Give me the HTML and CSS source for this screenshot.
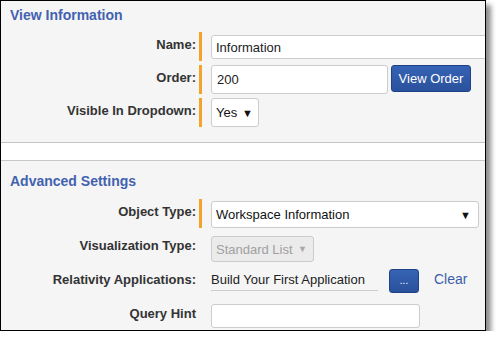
FILE: index.html
```html
<!DOCTYPE html>
<html lang="en">
<head>
	<meta charset="UTF-8">
	<title>View Information</title>
	<link rel="stylesheet" href="styles.css">
</head>
<body>
	<div class="frame">
		<div class="section first">
			<h2 class="heading">View Information</h2>
			<div class="row">
				<label class="label">Name:</label>
				<span class="req"></span>
				<div class="field">
					<input class="text name" type="text" value="Information">
				</div>
			</div>
			<div class="row">
				<label class="label">Order:</label>
				<span class="req"></span>
				<div class="field">
					<input class="text order" type="text" value="200">
					<button class="btn view-order">View Order</button>
				</div>
			</div>
			<div class="row">
				<label class="label">Visible In Dropdown:</label>
				<span class="req"></span>
				<div class="field">
					<div class="select yes">Yes <span class="arrow">&#9660;</span></div>
				</div>
			</div>
		</div>
		<div class="gap"></div>
		<div class="section second">
			<h2 class="heading">Advanced Settings</h2>
			<div class="row">
				<label class="label">Object Type:</label>
				<span class="req"></span>
				<div class="field">
					<div class="select objtype">Workspace Information <span class="arrow">&#9660;</span></div>
				</div>
			</div>
			<div class="row">
				<label class="label">Visualization Type:</label>
				<span class="req none"></span>
				<div class="field">
					<div class="select disabled">Standard List <span class="arrow">&#9660;</span></div>
				</div>
			</div>
			<div class="row">
				<label class="label">Relativity Applications:</label>
				<span class="req none"></span>
				<div class="field">
					<span class="apps">Build Your First Application</span>
					<button class="btn dots">...</button>
					<a class="clear" href="#">Clear</a>
				</div>
			</div>
			<div class="row">
				<label class="label">Query Hint</label>
				<span class="req none"></span>
				<div class="field">
					<input class="text hint" type="text">
				</div>
			</div>
		</div>
	</div>
</body>
</html>
```

FILE: styles.css
```css
body{
	margin: 0;
	background-color: white;
	font-family: "Liberation Sans", Arial, sans-serif;
	font-size: 13px;
	color: #333;
}

.frame{
	width: 484px;
	height: 329px;
	border: 1px solid black;
	background-color: #f5f5f5;
	box-shadow: 5px 5px 5px rgba(0, 0, 0, 0.45);
	overflow: hidden;
}

.section{
	display: flex;
	flex-direction: column;
	gap: 4px;
}

.first{
	padding: 6px 0 15px 0;
	border-bottom: 1px solid #c4c4c4;
	box-shadow: 0 1px 2px rgba(0, 0, 0, 0.15);
}

.second{
	padding-top: 12px;
	gap: 5px;
	border-top: 1px solid #c8c8c8;
}

.gap{
	height: 17px;
	background-color: white;
}

.heading{
	margin: 0 0 4px 0;
	padding-left: 9px;
	font-size: 14px;
	line-height: 17px;
	color: #4262b0;
}

.second .heading{
	margin-bottom: 4px;
}

.row{
	display: flex;
	height: 29px;
}

.label{
	flex-shrink: 0;
	width: 195px;
	padding-top: 5px;
	text-align: right;
	font-weight: bold;
	line-height: 15px;
	color: #333;
}

.req{
	flex-shrink: 0;
	width: 3px;
	margin-left: 3px;
	background-color: #f3a22a;
}

.req.none{
	background-color: transparent;
}

.field{
	display: flex;
	flex-shrink: 0;
	align-items: flex-start;
	margin-left: 9px;
}

.text{
	box-sizing: border-box;
	border: 1px solid #ccc;
	border-radius: 3px;
	background-color: white;
	font-family: inherit;
	font-size: 13px;
	color: #222;
	padding: 0 4px;
	margin: 0;
}

.name{
	width: 300px;
	height: 24px;
	margin-top: 3px;
}

.order{
	width: 177px;
	height: 29px;
	padding-left: 5px;
}

.hint{
	width: 209px;
	height: 24px;
	margin-top: 3px;
}

.btn{
	box-sizing: border-box;
	border: 1px solid #1f4286;
	border-radius: 3px;
	background: linear-gradient(#3663b4, #2a519c);
	color: white;
	font-family: inherit;
	font-size: 13px;
	padding: 0;
	margin: 0;
}

.view-order{
	width: 80px;
	height: 27px;
	margin-left: 3px;
}

.dots{
	width: 30px;
	height: 24px;
	margin: 2px 0 0 11px;
	font-size: 10px;
	line-height: 20px;
}

.select{
	box-sizing: border-box;
	display: flex;
	align-items: center;
	justify-content: space-between;
	border: 1px solid #ccc;
	border-radius: 3px;
	background-color: white;
	padding: 0 5px 0 4px;
	color: #111;
}

.arrow{
	font-size: 11px;
	color: #111;
}

.yes{
	width: 48px;
	height: 29px;
}

.objtype{
	width: 268px;
	height: 27px;
	margin-top: 2px;
	padding-right: 7px;
}

.disabled{
	width: 103px;
	height: 26px;
	margin-top: 3px;
	background-color: #ebebeb;
	color: #a0a0a0;
	padding-right: 6px;
}

.disabled .arrow{
	font-size: 9px;
	color: #a8a8a8;
}

.apps{
	width: 167px;
	margin-top: 5px;
	padding-bottom: 3px;
	border-bottom: 1px solid #ccc;
	line-height: 15px;
	color: #222;
}

.clear{
	margin: 5px 0 0 15px;
	line-height: 15px;
	color: #3d5ea8;
	text-decoration: none;
	font-size: 14px;
}
```
